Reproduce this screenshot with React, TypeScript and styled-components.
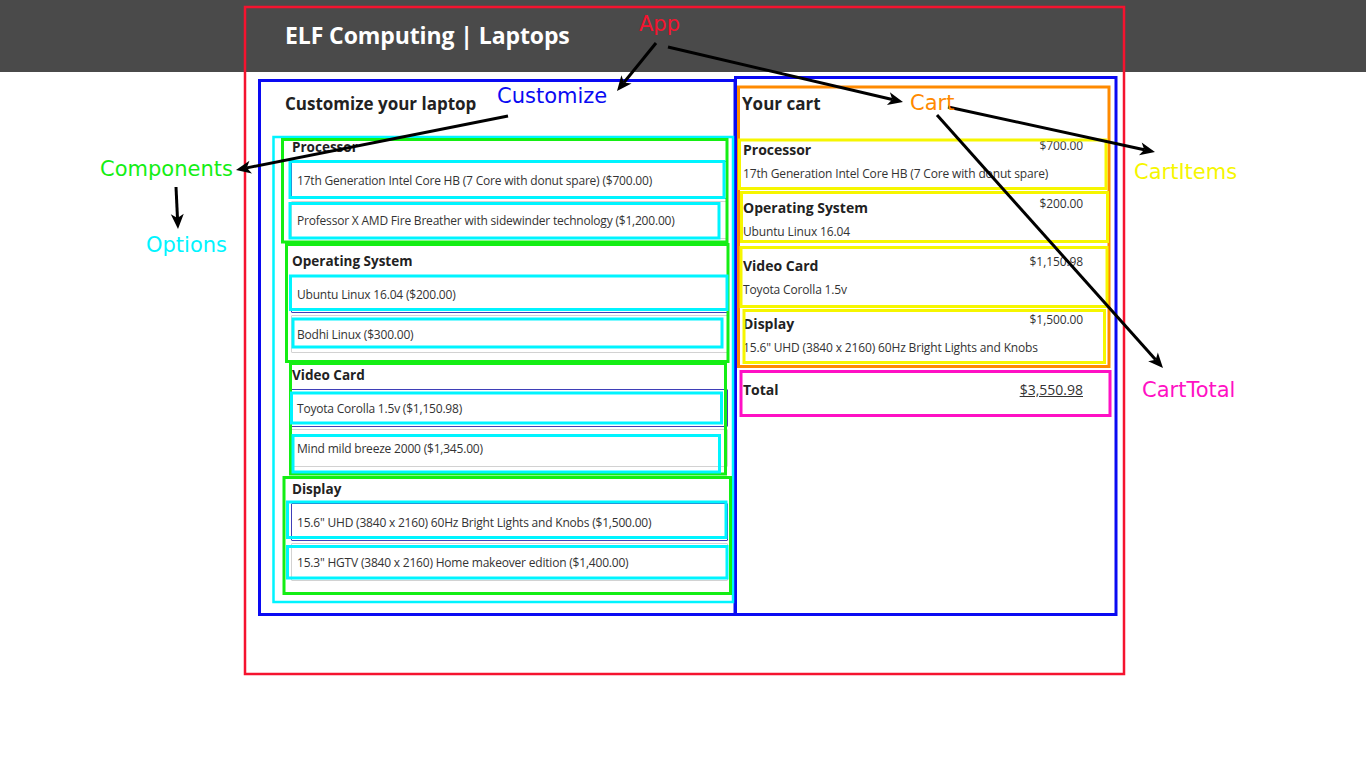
import React from "react";
import styled, { createGlobalStyle } from "styled-components";

const GlobalStyle = createGlobalStyle`
  html, body { margin: 0; padding: 0; background: #ffffff; }
  body { font-family: "Open Sans", "Noto Sans", sans-serif; color: #222; }
  * { box-sizing: border-box; }
`;

type Option = { label: string; cost: number; selected?: boolean };
type Part = { name: string; options: Option[] };

const PARTS: Part[] = [
  {
    name: "Processor",
    options: [
      { label: "17th Generation Intel Core HB (7 Core with donut spare)", cost: 700, selected: true },
      { label: "Professor X AMD Fire Breather with sidewinder technology", cost: 1200 },
    ],
  },
  {
    name: "Operating System",
    options: [
      { label: "Ubuntu Linux 16.04", cost: 200, selected: true },
      { label: "Bodhi Linux", cost: 300 },
    ],
  },
  {
    name: "Video Card",
    options: [
      { label: "Toyota Corolla 1.5v", cost: 1150.98, selected: true },
      { label: "Mind mild breeze 2000", cost: 1345 },
    ],
  },
  {
    name: "Display",
    options: [
      { label: '15.6" UHD (3840 x 2160) 60Hz Bright Lights and Knobs', cost: 1500, selected: true },
      { label: '15.3" HGTV (3840 x 2160) Home makeover edition', cost: 1400 },
    ],
  },
];

const USD = new Intl.NumberFormat("en-US", { style: "currency", currency: "USD" });

const Page = styled.div`
  position: relative;
  width: 1366px;
  height: 768px;
  overflow: hidden;
`;

const Header = styled.header`
  height: 72px;
  background: #4a4a4a;
`;

const Container = styled.div`
  width: 880px;
  margin: 0 auto;
`;

const HeaderInner = styled(Container)`
  height: 100%;
  display: flex;
  align-items: center;
  padding-left: 42px;
  padding-bottom: 3px;
`;

const Title = styled.h1`
  margin: 0;
  font-size: 23px;
  font-weight: 700;
  color: #ffffff;
  letter-spacing: -0.1px;
`;

const Main = styled(Container)`
  display: grid;
  grid-template-columns: 457px 1fr;
  padding-left: 42px;
`;

const Column = styled.section<{ $padRight?: number }>`
  padding-right: ${(p) => p.$padRight ?? 0}px;
`;

const SectionTitle = styled.h2`
  margin: 20px 0 0;
  font-size: 17px;
  line-height: 24px;
  font-weight: 700;
  color: #222;
`;

const Groups = styled.div`
  margin-top: 17px;
`;

const Group = styled.fieldset`
  margin: 0;
  border: 0;
  padding: 0 14px 6px 6px;
  min-width: 0;
`;

const GroupTitle = styled.h3`
  margin: 0;
  padding-left: 1px;
  font-size: 13.5px;
  line-height: 28px;
  font-weight: 700;
  color: #222;
`;

const OptionBox = styled.div<{ $selected?: boolean }>`
  height: 38px;
  margin-bottom: 2px;
  display: flex;
  align-items: center;
  padding-left: 5px;
  border: 1px solid ${(p) => (p.$selected ? "#3f3fb8" : "#d2d2d2")};
  border-radius: 1px;
  font-size: 12px;
  letter-spacing: -0.2px;
  color: #333;
`;

const CartList = styled.div`
  margin-top: 24px;
`;

const CartItem = styled.div`
  height: 58px;
  padding-left: 1px;
`;

const ItemHead = styled.div`
  display: flex;
  justify-content: space-between;
  align-items: flex-start;
`;

const ItemName = styled.div`
  font-size: 14px;
  line-height: 20px;
  font-weight: 700;
  color: #222;
`;

const ItemPrice = styled.div`
  font-size: 12px;
  line-height: 12px;
  color: #333;
  letter-spacing: -0.1px;
`;

const ItemDetail = styled.div`
  margin-top: 4px;
  font-size: 12px;
  line-height: 20px;
  color: #333;
  letter-spacing: -0.15px;
`;

const TotalRow = styled.div`
  margin-top: 8px;
  padding-left: 1px;
  display: flex;
  justify-content: space-between;
  align-items: center;
  line-height: 20px;
`;

const TotalLabel = styled.div`
  font-size: 14px;
  font-weight: 700;
  color: #222;
`;

const TotalValue = styled.div`
  font-size: 14px;
  color: #333;
  text-decoration: underline;
`;

const Overlay = styled.svg`
  position: absolute;
  left: 0;
  top: 0;
  pointer-events: none;
`;

type Box = { x1: number; y1: number; x2: number; y2: number; c: string; w: number };

const RED = "#f5132f";
const BLUE = "#0a0af2";
const CYAN = "#00f4ff";
const GREEN = "#14ee14";
const ORANGE = "#ff8a00";
const YELLOW = "#f6f600";
const MAGENTA = "#ff10c4";

const BOXES: Box[] = [
  { x1: 245, y1: 7, x2: 1124, y2: 674, c: RED, w: 2.5 },
  { x1: 259.5, y1: 80.5, x2: 735, y2: 614.5, c: BLUE, w: 3 },
  { x1: 735.5, y1: 77.5, x2: 1116, y2: 614.5, c: BLUE, w: 3 },
  { x1: 273.5, y1: 137, x2: 733, y2: 602, c: CYAN, w: 2.5 },
  // components
  { x1: 282.5, y1: 139.5, x2: 727, y2: 242, c: GREEN, w: 3 },
  { x1: 286.5, y1: 244.5, x2: 728, y2: 361.5, c: GREEN, w: 3 },
  { x1: 290.5, y1: 363.5, x2: 725.5, y2: 474, c: GREEN, w: 3 },
  { x1: 284, y1: 477.5, x2: 730.5, y2: 593.5, c: GREEN, w: 3 },
  // options
  { x1: 290, y1: 161.5, x2: 724, y2: 197.5, c: CYAN, w: 3 },
  { x1: 290, y1: 203.5, x2: 719, y2: 238, c: CYAN, w: 3 },
  { x1: 290.5, y1: 276, x2: 727, y2: 309.5, c: CYAN, w: 3 },
  { x1: 293, y1: 319, x2: 722, y2: 347, c: CYAN, w: 3 },
  { x1: 291.5, y1: 393, x2: 721.5, y2: 423, c: CYAN, w: 3 },
  { x1: 293, y1: 435.5, x2: 719.5, y2: 472, c: CYAN, w: 3 },
  { x1: 287.5, y1: 502, x2: 726, y2: 537.5, c: CYAN, w: 3 },
  { x1: 287.5, y1: 546.5, x2: 727, y2: 578, c: CYAN, w: 3 },
  // cart
  { x1: 738.5, y1: 87, x2: 1109, y2: 366.5, c: ORANGE, w: 3 },
  { x1: 739.5, y1: 140, x2: 1106, y2: 188.5, c: YELLOW, w: 3 },
  { x1: 741.5, y1: 192.5, x2: 1107.5, y2: 241.5, c: YELLOW, w: 3 },
  { x1: 741, y1: 247.5, x2: 1107, y2: 306.5, c: YELLOW, w: 3 },
  { x1: 744, y1: 310.5, x2: 1104.5, y2: 362.5, c: YELLOW, w: 3 },
  { x1: 741, y1: 371.5, x2: 1110, y2: 415.5, c: MAGENTA, w: 3 },
];

type Label = { x: number; y: number; text: string; c: string };

const LABELS: Label[] = [
  { x: 639, y: 31, text: "App", c: RED },
  { x: 497, y: 103, text: "Customize", c: BLUE },
  { x: 910, y: 110, text: "Cart", c: ORANGE },
  { x: 100, y: 176, text: "Components", c: GREEN },
  { x: 146, y: 252, text: "Options", c: CYAN },
  { x: 1134, y: 179, text: "CartItems", c: YELLOW },
  { x: 1142, y: 397, text: "CartTotal", c: MAGENTA },
];

type Arrow = { x1: number; y1: number; x2: number; y2: number };

const ARROWS: Arrow[] = [
  { x1: 656, y1: 43, x2: 617, y2: 91 },
  { x1: 668, y1: 47, x2: 903, y2: 102 },
  { x1: 508, y1: 116, x2: 236, y2: 170 },
  { x1: 176, y1: 187, x2: 178, y2: 229 },
  { x1: 948, y1: 107, x2: 1155, y2: 152 },
  { x1: 937, y1: 115, x2: 1163, y2: 368 },
];

function ArrowShape({ a }: { a: Arrow }) {
  const dx = a.x2 - a.x1;
  const dy = a.y2 - a.y1;
  const len = Math.hypot(dx, dy);
  const ux = dx / len;
  const uy = dy / len;
  const px = -uy;
  const py = ux;
  const L = 15;
  const W = 6.5;
  const N = 4;
  const bx = a.x2 - ux * L;
  const by = a.y2 - uy * L;
  const nx = a.x2 - ux * (L - N);
  const ny = a.y2 - uy * (L - N);
  const head = `M${a.x2},${a.y2} L${bx + px * W},${by + py * W} L${nx},${ny} L${bx - px * W},${by - py * W} Z`;
  return (
    <g>
      <line x1={a.x1} y1={a.y1} x2={nx} y2={ny} stroke="#000" strokeWidth={3} />
      <path d={head} fill="#000" />
    </g>
  );
}

export default function App() {
  const total = PARTS.reduce((sum, p) => sum + (p.options.find((o) => o.selected)?.cost ?? 0), 0);
  return (
    <Page>
      <GlobalStyle />
      <Header>
        <HeaderInner>
          <Title>ELF Computing | Laptops</Title>
        </HeaderInner>
      </Header>
      <Main>
        <Column>
          <SectionTitle>Customize your laptop</SectionTitle>
          <Groups>
            {PARTS.map((part) => (
              <Group key={part.name}>
                <GroupTitle>{part.name}</GroupTitle>
                {part.options.map((o) => (
                  <OptionBox key={o.label} $selected={o.selected}>
                    {o.label} ({USD.format(o.cost)})
                  </OptionBox>
                ))}
              </Group>
            ))}
          </Groups>
        </Column>
        <Column $padRight={40}>
          <SectionTitle>Your cart</SectionTitle>
          <CartList>
            {PARTS.map((part) => {
              const sel = part.options.find((o) => o.selected)!;
              return (
                <CartItem key={part.name}>
                  <ItemHead>
                    <ItemName>{part.name}</ItemName>
                    <ItemPrice>{USD.format(sel.cost)}</ItemPrice>
                  </ItemHead>
                  <ItemDetail>{sel.label}</ItemDetail>
                </CartItem>
              );
            })}
          </CartList>
          <TotalRow>
            <TotalLabel>Total</TotalLabel>
            <TotalValue>{USD.format(total)}</TotalValue>
          </TotalRow>
        </Column>
      </Main>
      <Overlay width={1366} height={768} viewBox="0 0 1366 768">
        {BOXES.map((b, i) => (
          <rect
            key={i}
            x={b.x1}
            y={b.y1}
            width={b.x2 - b.x1}
            height={b.y2 - b.y1}
            fill="none"
            stroke={b.c}
            strokeWidth={b.w}
          />
        ))}
        {ARROWS.map((a, i) => (
          <ArrowShape key={i} a={a} />
        ))}
        {LABELS.map((l) => (
          <text
            key={l.text}
            x={l.x}
            y={l.y}
            fill={l.c}
            fontFamily='"DejaVu Sans", sans-serif'
            fontSize={21}
          >
            {l.text}
          </text>
        ))}
      </Overlay>
    </Page>
  );
}
